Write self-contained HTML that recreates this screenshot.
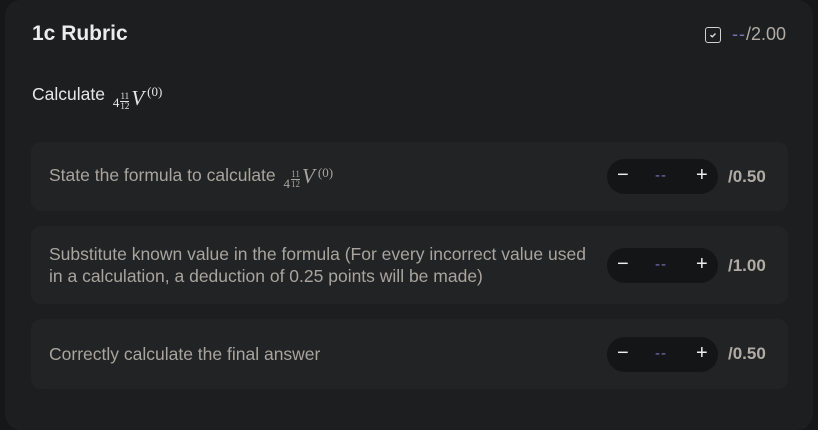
<!DOCTYPE html>
<html><head><style>
body{margin:0;width:818px;height:417px;background:#161718;overflow:hidden;font-family:"Liberation Sans",sans-serif;}
.card{position:absolute;left:5px;top:0;width:808px;height:430px;background:#1d1e20;border-radius:16px;}
.title{position:absolute;left:32px;top:22px;color:#ececec;font-weight:bold;font-size:21px;}
.tot{position:absolute;left:705px;top:24px;display:flex;align-items:center;font-size:18px;color:#b0aca5;}
.chk{width:14px;height:14px;border:1.5px solid #d0d0d0;border-radius:3px;margin-right:11px;display:flex;align-items:center;justify-content:center}
.dash{color:#7d6fbf;letter-spacing:1px}
.calc{position:absolute;left:32px;top:84px;color:#e6e6e6;font-size:17.5px;}
.m{font-family:"Liberation Serif",serif;}
.row{position:absolute;left:31px;width:757px;background:#222325;border-radius:10px;}
.txt{position:absolute;left:18px;color:#a8a49e;font-size:17.5px;line-height:22px;}
.pill{position:absolute;left:576px;width:111px;height:35px;background:#141516;border-radius:18px;color:#eee;font-size:20px;}
.pill span{position:absolute;top:5px}
.pts{position:absolute;left:697px;color:#b0aca5;font-size:17px;font-weight:bold;}
.mx{display:inline-flex;align-items:flex-start;font-family:"Liberation Serif",serif;vertical-align:-7px;margin-left:3px}
.mx .n{font-size:13px;margin-top:8px}
.mx .fr{display:inline-flex;flex-direction:column;font-size:9px;line-height:9px;margin:5px 2px 0 1px;text-align:center}
.mx .fr b{font-weight:normal;border-bottom:1px solid currentColor}
.mx .v{font-style:italic;font-size:21px;line-height:20px;margin-top:1px}
.mx .s{font-size:13px;margin-left:3px;margin-top:-3px}
</style></head><body>
<div class="card"></div>
<div class="title">1c Rubric</div>
<div class="tot"><div class="chk"><svg width="10" height="10" viewBox="0 0 10 10"><path d="M2.5 5.2 L4.3 6.8 L7.5 3.5" stroke="#ddd" stroke-width="1.4" fill="none"/></svg></div><span class="dash">--</span>/2.00</div>
<div class="calc">Calculate <span class="mx"><span class="n">4</span><span class="fr"><b>11</b><span>12</span></span><span class="v">V</span><span class="s">(0)</span></span></div>

<div class="row" style="top:142px;height:69px">
<div class="txt" style="top:22px">State the formula to calculate <span class="mx"><span class="n">4</span><span class="fr"><b>11</b><span>12</span></span><span class="v">V</span><span class="s">(0)</span></span></div>
<div class="pill" style="top:17px"><span style="left:10px">−</span><span class="dash" style="left:48px;font-size:15px;top:8px">--</span><span style="left:89px">+</span></div>
<div class="pts" style="top:25px">/0.50</div></div>

<div class="row" style="top:226px;height:78px">
<div class="txt" style="top:17px">Substitute known value in the formula (For every incorrect value used<br>in a calculation, a deduction of 0.25 points will be made)</div>
<div class="pill" style="top:22px"><span style="left:10px">−</span><span class="dash" style="left:48px;font-size:15px;top:8px">--</span><span style="left:89px">+</span></div>
<div class="pts" style="top:30px">/1.00</div></div>

<div class="row" style="top:319px;height:70px">
<div class="txt" style="top:24px">Correctly calculate the final answer</div>
<div class="pill" style="top:18px"><span style="left:10px">−</span><span class="dash" style="left:48px;font-size:15px;top:8px">--</span><span style="left:89px">+</span></div>
<div class="pts" style="top:25px">/0.50</div></div>
</body></html>
